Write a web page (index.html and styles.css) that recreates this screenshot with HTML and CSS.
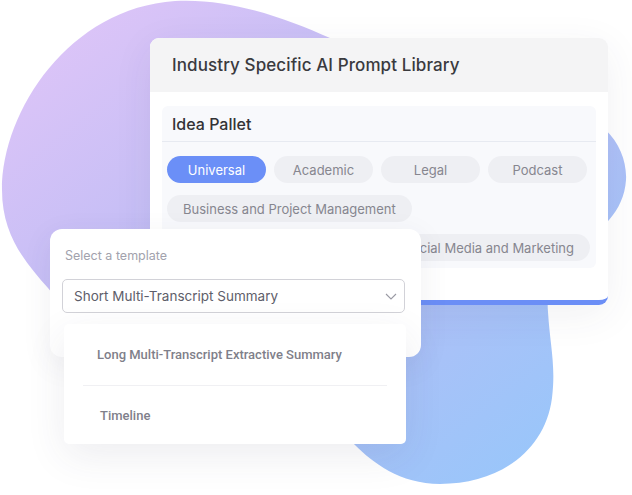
FILE: index.html
```html
<!DOCTYPE html>
<html>
<head>
<meta charset="utf-8">
<link rel="stylesheet" href="styles.css">
</head>
<body>
<div class="stage">
  <svg class="blob" width="632" height="495" viewBox="0 0 632 495">
    <defs>
      <linearGradient id="g" x1="0" y1="0" x2="1" y2="1">
        <stop offset="0" stop-color="#e3c6f8"/>
        <stop offset="0.45" stop-color="#bcbcf5"/>
        <stop offset="1" stop-color="#92c8fb"/>
      </linearGradient>
    </defs>
    <path fill="url(#g)" d="M175,1 C230,-2 285,18 330,38 C400,68 470,92 545,102 C600,110 628,145 626,180 C624,212 600,232 576,246 C552,262 546,288 548,312 C550,345 556,365 552,398 C545,452 498,484 440,484 C400,484 372,462 355,445 C330,420 260,390 170,378 C110,368 75,320 48,288 C25,262 2,235 2,190 C2,110 70,8 175,1 Z"/>
  </svg>

  <div class="main-card">
    <div class="main-head">Industry Specific AI Prompt Library</div>
    <div class="main-body">
      <div class="panel">
        <div class="panel-head">Idea Pallet</div>
        <div class="chips">
          <div class="chip-row">
            <span class="chip chip-fixed chip-active">Universal</span>
            <span class="chip chip-fixed">Academic</span>
            <span class="chip chip-fixed">Legal</span>
            <span class="chip chip-fixed">Podcast</span>
          </div>
          <div class="chip-row">
            <span class="chip">Business and Project Management</span>
          </div>
          <div class="chip-row chip-row-split">
            <span class="chip">Healthcare</span>
            <span class="chip">Social Media and Marketing</span>
          </div>
        </div>
      </div>
    </div>
  </div>

  <div class="select-card">
    <div class="select-label">Select a template</div>
    <div class="select-box">
      <span>Short Multi-Transcript Summary</span>
      <svg class="chev" width="12" height="7" viewBox="0 0 12 7"><path d="M1 1 L6 6 L11 1" fill="none" stroke="#9a9aa4" stroke-width="1.1"/></svg>
    </div>
  </div>

  <div class="dropdown">
    <div class="dd-item">Long Multi-Transcript Extractive Summary</div>
    <div class="dd-sep"></div>
    <div class="dd-item dd-item-b">Timeline</div>
  </div>
</div>
</body>
</html>
```

FILE: styles.css
```css
* { box-sizing: border-box; }
html, body { margin: 0; padding: 0; background: #ffffff; }
body { font-family: Inter, "Noto Sans", "Liberation Sans", sans-serif; }

.stage {
  position: relative;
  width: 632px;
  height: 495px;
  overflow: hidden;
  padding-top: 38px;
}

.blob {
  position: absolute;
  left: 0;
  top: 0;
}

.main-card {
  position: relative;
  margin-left: 150px;
  width: 458px;
  height: 267px;
  background: #ffffff;
  border-radius: 9px;
  border-bottom: 5px solid #6b8ef6;
  box-shadow: 0 10px 40px rgba(60, 60, 90, 0.07);
  overflow: hidden;
}

.main-head {
  height: 54px;
  background: #f4f4f5;
  display: flex;
  align-items: center;
  padding-left: 22px;
  font-size: 17px;
  font-weight: 500;
  color: #3a3a3e;
  letter-spacing: 0.1px;
}

.main-body {
  padding: 14px 12px 0 12px;
}

.panel {
  height: 162px;
  background: #f8f9fc;
  border-radius: 6px;
}

.panel-head {
  height: 36px;
  display: flex;
  align-items: center;
  padding-left: 10px;
  font-size: 16px;
  font-weight: 500;
  color: #333336;
  border-bottom: 1px solid #e7eaf1;
}

.chips {
  padding: 14px 6px 0 5px;
  display: flex;
  flex-direction: column;
  gap: 12px;
}

.chip-row {
  display: flex;
  gap: 8px;
}

.chip-row-split {
  justify-content: space-between;
}

.chip {
  height: 27px;
  display: inline-flex;
  align-items: center;
  justify-content: center;
  padding: 0 16px;
  border-radius: 14px;
  background: #eeeff3;
  color: #86868f;
  font-size: 13px;
  white-space: nowrap;
}

.chip-fixed {
  width: 99px;
  padding: 0;
}

.chip-active {
  background: #6b8ff7;
  color: #ffffff;
}

.select-card {
  position: absolute;
  left: 50px;
  top: 229px;
  width: 371px;
  height: 128px;
  background: #ffffff;
  border-radius: 12px;
  box-shadow: 0 8px 30px rgba(60, 60, 90, 0.08);
  padding: 19px 16px 0 12px;
}

.select-label {
  padding-left: 3px;
  font-size: 12.5px;
  line-height: 16px;
  color: #a2a2ad;
  margin-bottom: 15px;
}

.select-box {
  width: 343px;
  height: 34px;
  border: 1px solid #d2d2d8;
  border-radius: 5px;
  display: flex;
  align-items: center;
  justify-content: space-between;
  padding: 0 4px 0 11px;
  font-size: 13.5px;
  color: #5e5e6a;
}

.chev { margin-right: 3px; }

.dropdown {
  position: absolute;
  left: 64px;
  top: 324px;
  width: 342px;
  height: 120px;
  background: #ffffff;
  border-radius: 5px;
  box-shadow: 0 12px 40px rgba(60, 60, 90, 0.09);
}

.dd-item {
  height: 61px;
  display: flex;
  align-items: center;
  padding-left: 33px;
  font-family: Roboto, "Liberation Sans", sans-serif;
  font-weight: 500;
  font-size: 13px;
  color: #7f7f8a;
}

.dd-item-b {
  height: 58px;
  padding-left: 36px;
}

.dd-sep {
  height: 1px;
  margin: 0 19px;
  background: #f0f0f3;
}
```
